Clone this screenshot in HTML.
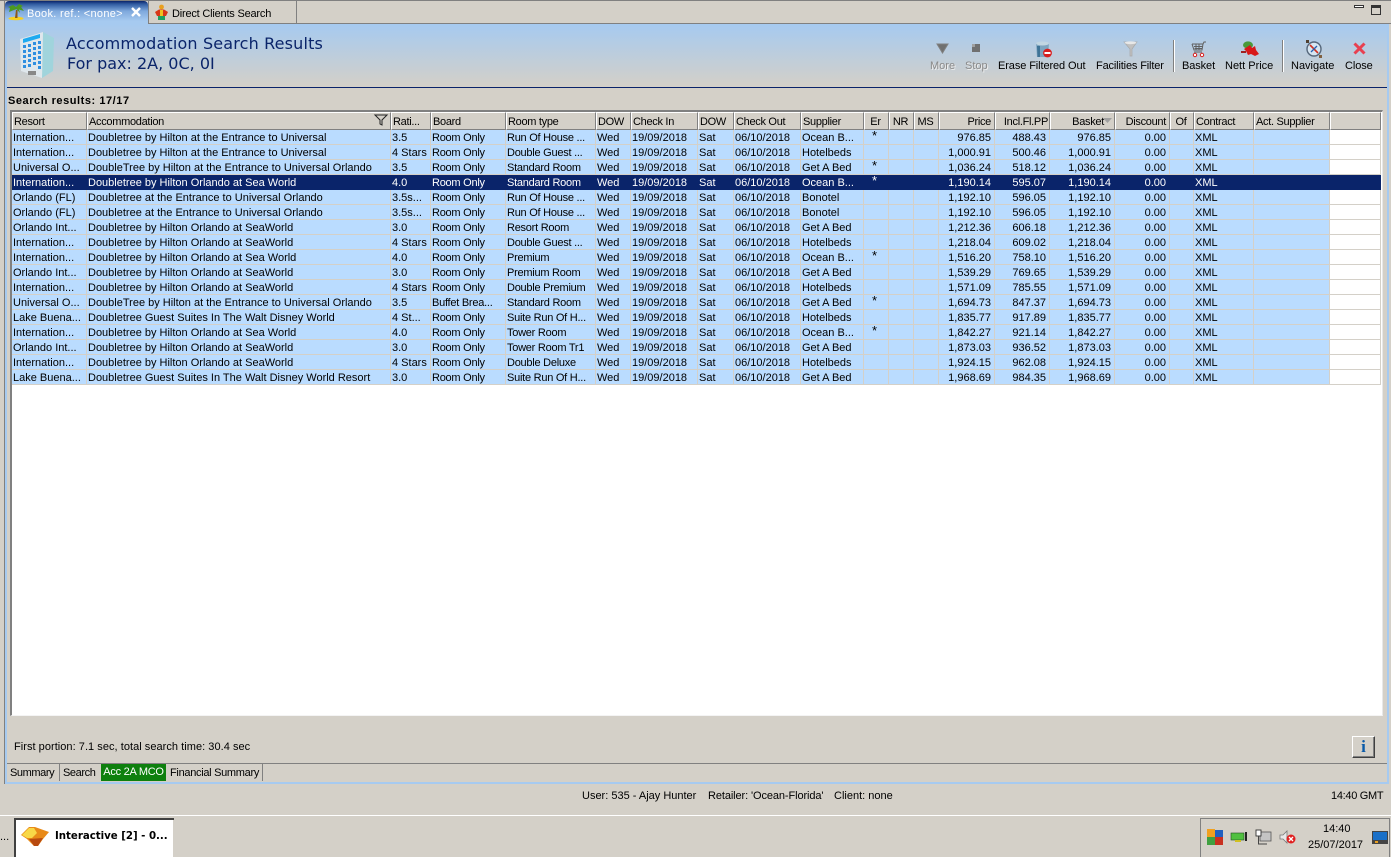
<!DOCTYPE html>
<html><head><meta charset="utf-8"><style>
html,body{margin:0;padding:0}
body{width:1391px;height:857px;position:relative;overflow:hidden;background:#d4d0c8;font:11px "Liberation Sans",sans-serif;color:#000}
.a{position:absolute;white-space:nowrap}
svg{position:absolute;overflow:visible}
#t{position:absolute;left:12px;top:112px;border-collapse:separate;border-spacing:0;table-layout:fixed;width:1369px}
#t th{height:14px;line-height:14px;padding:2px 0 0 1px;background:#d4d0c8;font-weight:normal;text-align:left;letter-spacing:-.3px;border-top:1px solid #fff;border-left:1px solid #fff;border-right:1px solid #808080;border-bottom:1px solid #808080;overflow:hidden;white-space:nowrap;box-sizing:content-box}
#t th.m{text-align:center;padding-right:3px}
#t td{height:12px;padding:2px 0 0 1px;background:#badcff;border-right:1px solid #d4d0c8;border-bottom:1px solid #d4d0c8;overflow:hidden;white-space:nowrap;line-height:12px}
#t td:nth-child(4),#t td:nth-child(5){letter-spacing:-.25px}
#t td:last-child{background:#fff}
#t th:last-child{background:#d4d0c8}
#t tr.s td{background:#0a246a;color:#fff;border-color:#0a246a}
#t td.r,#t th.r{text-align:right;padding-right:3px}
#t td.c{text-align:center;padding:0 3px 2px 0;height:12px;font-size:13px;line-height:12px}
</style></head><body>

<!-- outer frame -->
<div class="a" style="left:0;top:0;width:1391px;height:1px;background:#808080"></div>
<div class="a" style="left:4px;top:1px;width:1px;height:783px;background:#808080"></div>
<div class="a" style="left:297px;top:23px;width:1094px;height:1px;background:#808080"></div>
<!-- main blue frame -->
<div class="a" style="left:5px;top:24px;width:2px;height:760px;background:#a6caf0"></div>
<div class="a" style="left:1387px;top:24px;width:2px;height:760px;background:#a6caf0"></div>
<div class="a" style="left:5px;top:782px;width:1384px;height:2px;background:#a6caf0"></div>

<!-- tabs -->
<div class="a" style="left:5px;top:1px;width:143px;height:23px;background:linear-gradient(#0a246a 0,#2f5aa0 3px,#7ea8dc 10px,#a6caf0 20px);border-radius:4px 4px 0 0"></div>
<div class="a" style="left:148px;top:1px;width:1px;height:23px;background:#808080"></div>
<div class="a" style="left:27px;top:7px;color:#fff;font-size:11px;line-height:14px;letter-spacing:.3px">Book. ref.: &lt;none&gt;</div>
<svg style="left:8px;top:4px" width="16" height="16" viewBox="0 0 16 16"><ellipse cx="8" cy="14.5" rx="7.5" ry="1.8" fill="#f5d020"/><path d="M7 14 L8 6 L9.5 6 L9.5 14Z" fill="#8a5a18"/><path d="M8.5 5 L1 8 L2 4 L0 3 L5 1 L8 3 L11 0 L15 2 L13 3 L16 7 L11 5.5 L12 9Z" fill="#4b9a20"/></svg>
<svg style="left:131px;top:7px" width="10" height="10" viewBox="0 0 10 10"><path d="M1 1 L9 9 M9 1 L1 9" stroke="#fff" stroke-width="2.4"/></svg>
<div class="a" style="left:149px;top:1px;width:148px;height:22px;background:#d4d0c8;border-right:1px solid #808080;box-sizing:border-box"></div>
<div class="a" style="left:149px;top:23px;width:148px;height:1px;background:#808080"></div>
<div class="a" style="left:172px;top:7px;line-height:14px;letter-spacing:-.2px">Direct Clients Search</div>
<svg style="left:154px;top:4px" width="15" height="17" viewBox="0 0 15 17"><circle cx="7.5" cy="3" r="2.4" fill="#e8a020"/><path d="M1 8 L5 5.5 L10 5.5 L14 8 L12 12 L3 12Z" fill="#d83818"/><path d="M6 6 L9 6 L9 12 L6 12Z" fill="#f0c020"/><rect x="4" y="12" width="7" height="4" fill="#20a060"/></svg>
<!-- window buttons -->
<div class="a" style="left:1354px;top:5px;width:8px;height:1px;border:1px solid #333;background:#fff"></div>
<div class="a" style="left:1371px;top:5px;width:8px;height:6px;border:1px solid #333;border-top-width:3px"></div>

<!-- banner -->
<div class="a" style="left:7px;top:24px;width:1380px;height:63px;background:linear-gradient(#a6caf0,#d4d0c8)"></div>
<div class="a" style="left:7px;top:87px;width:1380px;height:1px;background:#0a246a"></div>
<svg style="left:20px;top:32px" width="34" height="47" viewBox="0 0 34 47"><path d="M23 0 L34 6 L33 39 L22 46Z" fill="#a0d4dc"/><path d="M0 7 L23 0 L22 46 L1 39Z" fill="#dfe7ec"/><path d="M3 7 L20 2 L20 6 L3 11Z" fill="#1eaaf0"/><g fill="#2f8fe0"><rect x="3" y="13" width="3" height="3"/><rect x="8" y="12" width="3" height="3"/><rect x="13" y="10" width="3" height="3"/><rect x="18" y="9" width="3" height="3"/><rect x="3" y="18" width="3" height="3"/><rect x="8" y="17" width="3" height="3"/><rect x="13" y="15" width="3" height="3"/><rect x="18" y="14" width="3" height="3"/><rect x="3" y="23" width="3" height="3"/><rect x="8" y="22" width="3" height="3"/><rect x="13" y="20" width="3" height="3"/><rect x="18" y="19" width="3" height="3"/><rect x="3" y="28" width="3" height="3"/><rect x="8" y="27" width="3" height="3"/><rect x="13" y="25" width="3" height="3"/><rect x="18" y="24" width="3" height="3"/><rect x="3" y="33" width="3" height="3"/><rect x="8" y="32" width="3" height="3"/><rect x="13" y="30" width="3" height="3"/><rect x="18" y="29" width="3" height="3"/><rect x="18" y="34" width="3" height="3"/></g><rect x="8" y="39" width="8" height="4" fill="#888"/></svg>
<div class="a" style="left:66px;top:34px;font:16px/20px 'DejaVu Sans',sans-serif;color:#0a246a;letter-spacing:.01em">Accommodation Search Results</div>
<div class="a" style="left:67px;top:54px;font:16px/20px 'DejaVu Sans',sans-serif;color:#0a246a">For pax: 2A, 0C, 0I</div>

<!-- toolbar -->
<div class="a" style="left:930px;top:59px;color:#8a8a8a;text-shadow:1px 1px 0 #eee;line-height:14px">More</div>
<div class="a" style="left:965px;top:59px;color:#8a8a8a;text-shadow:1px 1px 0 #eee;line-height:14px">Stop</div>
<div class="a" style="left:998px;top:59px;line-height:14px;letter-spacing:-.1px">Erase Filtered Out</div>
<div class="a" style="left:1096px;top:59px;line-height:14px;letter-spacing:-.15px">Facilities Filter</div>
<div class="a" style="left:1182px;top:59px;line-height:14px;letter-spacing:-.1px">Basket</div>
<div class="a" style="left:1225px;top:59px;line-height:14px">Nett Price</div>
<div class="a" style="left:1291px;top:59px;line-height:14px">Navigate</div>
<div class="a" style="left:1345px;top:59px;line-height:14px;letter-spacing:-.1px">Close</div>
<div class="a" style="left:1173px;top:40px;width:2px;height:32px;background:linear-gradient(90deg,#808080 50%,#fff 50%)"></div>
<div class="a" style="left:1282px;top:40px;width:2px;height:32px;background:linear-gradient(90deg,#808080 50%,#fff 50%)"></div>
<svg style="left:936px;top:43px" width="13" height="11" viewBox="0 0 13 11"><path d="M1 1 H12 L6.5 10Z" fill="#707070" stroke="#808080"/></svg>
<svg style="left:972px;top:44px" width="9" height="9" viewBox="0 0 9 9"><rect width="8" height="8" fill="#707070"/><rect width="3" height="3" fill="#a0a0a0"/></svg>
<svg style="left:1036px;top:41px" width="16" height="17" viewBox="0 0 16 17"><path d="M0 2 H13 L12 16 H1Z" fill="#7ea4bf"/><ellipse cx="6.5" cy="2.5" rx="6.5" ry="2" fill="#c2d6e2"/><path d="M1 5 H4 V16 H1.5Z" fill="#3f7396"/><circle cx="11.5" cy="12" r="4.4" fill="#d81e1e"/><rect x="8.5" y="11" width="6" height="2" fill="#fff"/></svg>
<svg style="left:1124px;top:41px" width="14" height="16" viewBox="0 0 14 16"><path d="M0 1 H13 L8 8 V15 H6 V8Z" fill="#c0c0c0" stroke="#a8a8a8" stroke-width=".7"/><ellipse cx="6.5" cy="1.8" rx="6" ry="1.4" fill="#e8e8e8"/></svg>
<svg style="left:1191px;top:41px" width="16" height="17" viewBox="0 0 16 17"><path d="M1 3 H12 L11 9 H3 L1 3 M3 5.5H12 M3.5 7.5H11 M5 3V9 M8 3V9 M12 3 L13 1 H15 M3 11H11" fill="none" stroke="#606060"/><circle cx="4" cy="14" r="1.7" fill="#fff" stroke="#d81e1e"/><circle cx="11" cy="14" r="1.7" fill="#fff" stroke="#d81e1e"/></svg>
<svg style="left:1241px;top:41px" width="18" height="16" viewBox="0 0 18 16"><ellipse cx="7" cy="4" rx="5" ry="3.6" fill="#4a9a3a"/><path d="M3 8 L9 4 L11 7 L14 5 L15 9 L18 13 L14 15 L10 13 L7 14 L5 10Z" fill="#d81818"/><rect x="0" y="10" width="5" height="2" fill="#a02020"/></svg>
<svg style="left:1305px;top:40px" width="18" height="18" viewBox="0 0 18 18"><circle cx="9" cy="9" r="7" fill="#d6e6f2" stroke="#55667a" stroke-width="1.4"/><path d="M5 5 L13 13" stroke="#d03020" stroke-width="1.6"/><path d="M12 6 L6 12" stroke="#2a60b0" stroke-width="1.3"/><rect x="1" y="0" width="3" height="3" fill="#504030"/><rect x="14" y="15" width="3" height="3" fill="#806040"/></svg>
<svg style="left:1353px;top:42px" width="13" height="13" viewBox="0 0 13 13"><path d="M1.5 1.5 L11.5 11.5 M11.5 1.5 L1.5 11.5" stroke="#e84050" stroke-width="3"/></svg>

<!-- search label -->
<div class="a" style="left:8px;top:94px;font-weight:bold;line-height:14px;font-size:11px;letter-spacing:.55px">Search results: 17/17</div>

<!-- table panel -->
<div class="a" style="left:10px;top:110px;width:1373px;height:606px;background:#fff;box-sizing:border-box;border-top:2px solid #808080;border-left:2px solid #808080;border-right:1px solid #e8e8e8;border-bottom:1px solid #f4f4f4"></div>

<table id="t"><colgroup>
<col style="width:75px"><col style="width:304px"><col style="width:40px"><col style="width:75px"><col style="width:90px"><col style="width:35px"><col style="width:67px"><col style="width:36px"><col style="width:67px"><col style="width:63px"><col style="width:25px"><col style="width:25px"><col style="width:25px"><col style="width:56px"><col style="width:55px"><col style="width:65px"><col style="width:55px"><col style="width:24px"><col style="width:60px"><col style="width:76px"><col>
</colgroup>
<tr><th>Resort</th><th>Accommodation</th><th>Rati...</th><th>Board</th><th>Room type</th><th>DOW</th><th>Check In</th><th>DOW</th><th>Check Out</th><th>Supplier</th><th class="m">Er</th><th class="m">NR</th><th class="m">MS</th><th class="r">Price</th><th class="r" style="padding-right:1px">Incl.Fl.PP</th><th class="r" style="padding-right:10px">Basket</th><th class="r">Discount</th><th class="m">Of</th><th>Contract</th><th>Act. Supplier</th><th></th></tr>
<tr><td>Internation...</td><td>Doubletree by Hilton at the Entrance to Universal</td><td>3.5</td><td>Room Only</td><td>Run Of House ...</td><td>Wed</td><td>19/09/2018</td><td>Sat</td><td>06/10/2018</td><td>Ocean B...</td><td class="c">*</td><td></td><td></td><td class="r">976.85</td><td class="r">488.43</td><td class="r">976.85</td><td class="r">0.00</td><td></td><td>XML</td><td></td><td></td></tr>
<tr><td>Internation...</td><td>Doubletree by Hilton at the Entrance to Universal</td><td>4 Stars</td><td>Room Only</td><td>Double Guest ...</td><td>Wed</td><td>19/09/2018</td><td>Sat</td><td>06/10/2018</td><td>Hotelbeds</td><td></td><td></td><td></td><td class="r">1,000.91</td><td class="r">500.46</td><td class="r">1,000.91</td><td class="r">0.00</td><td></td><td>XML</td><td></td><td></td></tr>
<tr><td>Universal O...</td><td>DoubleTree by Hilton at the Entrance to Universal Orlando</td><td>3.5</td><td>Room Only</td><td>Standard Room</td><td>Wed</td><td>19/09/2018</td><td>Sat</td><td>06/10/2018</td><td>Get A Bed</td><td class="c">*</td><td></td><td></td><td class="r">1,036.24</td><td class="r">518.12</td><td class="r">1,036.24</td><td class="r">0.00</td><td></td><td>XML</td><td></td><td></td></tr>
<tr class="s"><td>Internation...</td><td>Doubletree by Hilton Orlando at Sea World</td><td>4.0</td><td>Room Only</td><td>Standard Room</td><td>Wed</td><td>19/09/2018</td><td>Sat</td><td>06/10/2018</td><td>Ocean B...</td><td class="c">*</td><td></td><td></td><td class="r">1,190.14</td><td class="r">595.07</td><td class="r">1,190.14</td><td class="r">0.00</td><td></td><td>XML</td><td></td><td></td></tr>
<tr><td>Orlando (FL)</td><td>Doubletree at the Entrance to Universal Orlando</td><td>3.5s...</td><td>Room Only</td><td>Run Of House ...</td><td>Wed</td><td>19/09/2018</td><td>Sat</td><td>06/10/2018</td><td>Bonotel</td><td></td><td></td><td></td><td class="r">1,192.10</td><td class="r">596.05</td><td class="r">1,192.10</td><td class="r">0.00</td><td></td><td>XML</td><td></td><td></td></tr>
<tr><td>Orlando (FL)</td><td>Doubletree at the Entrance to Universal Orlando</td><td>3.5s...</td><td>Room Only</td><td>Run Of House ...</td><td>Wed</td><td>19/09/2018</td><td>Sat</td><td>06/10/2018</td><td>Bonotel</td><td></td><td></td><td></td><td class="r">1,192.10</td><td class="r">596.05</td><td class="r">1,192.10</td><td class="r">0.00</td><td></td><td>XML</td><td></td><td></td></tr>
<tr><td>Orlando Int...</td><td>Doubletree by Hilton Orlando at SeaWorld</td><td>3.0</td><td>Room Only</td><td>Resort Room</td><td>Wed</td><td>19/09/2018</td><td>Sat</td><td>06/10/2018</td><td>Get A Bed</td><td></td><td></td><td></td><td class="r">1,212.36</td><td class="r">606.18</td><td class="r">1,212.36</td><td class="r">0.00</td><td></td><td>XML</td><td></td><td></td></tr>
<tr><td>Internation...</td><td>Doubletree by Hilton Orlando at SeaWorld</td><td>4 Stars</td><td>Room Only</td><td>Double Guest ...</td><td>Wed</td><td>19/09/2018</td><td>Sat</td><td>06/10/2018</td><td>Hotelbeds</td><td></td><td></td><td></td><td class="r">1,218.04</td><td class="r">609.02</td><td class="r">1,218.04</td><td class="r">0.00</td><td></td><td>XML</td><td></td><td></td></tr>
<tr><td>Internation...</td><td>Doubletree by Hilton Orlando at Sea World</td><td>4.0</td><td>Room Only</td><td>Premium</td><td>Wed</td><td>19/09/2018</td><td>Sat</td><td>06/10/2018</td><td>Ocean B...</td><td class="c">*</td><td></td><td></td><td class="r">1,516.20</td><td class="r">758.10</td><td class="r">1,516.20</td><td class="r">0.00</td><td></td><td>XML</td><td></td><td></td></tr>
<tr><td>Orlando Int...</td><td>Doubletree by Hilton Orlando at SeaWorld</td><td>3.0</td><td>Room Only</td><td>Premium Room</td><td>Wed</td><td>19/09/2018</td><td>Sat</td><td>06/10/2018</td><td>Get A Bed</td><td></td><td></td><td></td><td class="r">1,539.29</td><td class="r">769.65</td><td class="r">1,539.29</td><td class="r">0.00</td><td></td><td>XML</td><td></td><td></td></tr>
<tr><td>Internation...</td><td>Doubletree by Hilton Orlando at SeaWorld</td><td>4 Stars</td><td>Room Only</td><td>Double Premium</td><td>Wed</td><td>19/09/2018</td><td>Sat</td><td>06/10/2018</td><td>Hotelbeds</td><td></td><td></td><td></td><td class="r">1,571.09</td><td class="r">785.55</td><td class="r">1,571.09</td><td class="r">0.00</td><td></td><td>XML</td><td></td><td></td></tr>
<tr><td>Universal O...</td><td>DoubleTree by Hilton at the Entrance to Universal Orlando</td><td>3.5</td><td>Buffet Brea...</td><td>Standard Room</td><td>Wed</td><td>19/09/2018</td><td>Sat</td><td>06/10/2018</td><td>Get A Bed</td><td class="c">*</td><td></td><td></td><td class="r">1,694.73</td><td class="r">847.37</td><td class="r">1,694.73</td><td class="r">0.00</td><td></td><td>XML</td><td></td><td></td></tr>
<tr><td>Lake Buena...</td><td>Doubletree Guest Suites In The Walt Disney World</td><td>4 St...</td><td>Room Only</td><td>Suite Run Of H...</td><td>Wed</td><td>19/09/2018</td><td>Sat</td><td>06/10/2018</td><td>Hotelbeds</td><td></td><td></td><td></td><td class="r">1,835.77</td><td class="r">917.89</td><td class="r">1,835.77</td><td class="r">0.00</td><td></td><td>XML</td><td></td><td></td></tr>
<tr><td>Internation...</td><td>Doubletree by Hilton Orlando at Sea World</td><td>4.0</td><td>Room Only</td><td>Tower Room</td><td>Wed</td><td>19/09/2018</td><td>Sat</td><td>06/10/2018</td><td>Ocean B...</td><td class="c">*</td><td></td><td></td><td class="r">1,842.27</td><td class="r">921.14</td><td class="r">1,842.27</td><td class="r">0.00</td><td></td><td>XML</td><td></td><td></td></tr>
<tr><td>Orlando Int...</td><td>Doubletree by Hilton Orlando at SeaWorld</td><td>3.0</td><td>Room Only</td><td>Tower Room Tr1</td><td>Wed</td><td>19/09/2018</td><td>Sat</td><td>06/10/2018</td><td>Get A Bed</td><td></td><td></td><td></td><td class="r">1,873.03</td><td class="r">936.52</td><td class="r">1,873.03</td><td class="r">0.00</td><td></td><td>XML</td><td></td><td></td></tr>
<tr><td>Internation...</td><td>Doubletree by Hilton Orlando at SeaWorld</td><td>4 Stars</td><td>Room Only</td><td>Double Deluxe</td><td>Wed</td><td>19/09/2018</td><td>Sat</td><td>06/10/2018</td><td>Hotelbeds</td><td></td><td></td><td></td><td class="r">1,924.15</td><td class="r">962.08</td><td class="r">1,924.15</td><td class="r">0.00</td><td></td><td>XML</td><td></td><td></td></tr>
<tr><td>Lake Buena...</td><td>Doubletree Guest Suites In The Walt Disney World Resort</td><td>3.0</td><td>Room Only</td><td>Suite Run Of H...</td><td>Wed</td><td>19/09/2018</td><td>Sat</td><td>06/10/2018</td><td>Get A Bed</td><td></td><td></td><td></td><td class="r">1,968.69</td><td class="r">984.35</td><td class="r">1,968.69</td><td class="r">0.00</td><td></td><td>XML</td><td></td><td></td></tr>
</table>
<!-- header icons -->
<svg style="left:374px;top:114px" width="14" height="12" viewBox="0 0 14 12"><path d="M1 1 H13 L8 6 V11 L6 10 V6Z" fill="none" stroke="#222"/></svg>
<svg style="left:1103px;top:118px" width="9" height="5" viewBox="0 0 9 5"><path d="M0 0 H9 L4.5 5Z" fill="#a0a0a0"/></svg>

<!-- bottom of panel -->
<div class="a" style="left:14px;top:740px;line-height:14px;letter-spacing:.04px">First portion: 7.1 sec, total search time: 30.4 sec</div>
<div class="a" style="left:1352px;top:736px;width:23px;height:22px;box-sizing:border-box;background:#d4d0c8;border:1px solid;border-color:#fff #404040 #404040 #fff;box-shadow:inset -1px -1px 0 #808080;text-align:center;font:bold 17px/20px 'Liberation Serif',serif;color:#0a5aa8">i</div>
<div class="a" style="left:7px;top:763px;width:1380px;height:1px;background:#808080"></div>
<div class="a" style="left:10px;top:766px;line-height:14px;letter-spacing:-.4px">Summary</div>
<div class="a" style="left:59px;top:764px;width:1px;height:17px;background:#808080"></div>
<div class="a" style="left:63px;top:766px;line-height:14px;letter-spacing:-.4px">Search</div>
<div class="a" style="left:101px;top:764px;width:65px;height:17px;background:#0e800e;color:#fff;text-align:center;line-height:17px;letter-spacing:-.25px">Acc 2A MCO</div>
<div class="a" style="left:170px;top:766px;line-height:14px;letter-spacing:-.3px">Financial Summary</div>
<div class="a" style="left:262px;top:764px;width:1px;height:17px;background:#808080"></div>

<!-- status -->
<div class="a" style="left:582px;top:789px;line-height:14px">User: 535 - Ajay Hunter</div>
<div class="a" style="left:708px;top:789px;line-height:14px;letter-spacing:-.1px">Retailer: 'Ocean-Florida'</div>
<div class="a" style="left:834px;top:789px;line-height:14px">Client: none</div>
<div class="a" style="left:1331px;top:789px;line-height:14px;letter-spacing:-.3px">14:40 GMT</div>

<!-- taskbar -->
<div class="a" style="left:0;top:815px;width:1391px;height:1px;background:#fff"></div>
<div class="a" style="left:0;top:830px;line-height:14px">...</div>
<div class="a" style="left:14px;top:818px;width:2px;height:39px;background:#404040"></div>
<div class="a" style="left:14px;top:818px;width:160px;height:2px;background:#404040"></div>
<div class="a" style="left:16px;top:820px;width:158px;height:37px;background:#fff;box-sizing:border-box;border-right:1px solid #d4d0c8"></div>
<svg style="left:21px;top:826px" width="29" height="22" viewBox="0 0 29 22"><path d="M0 9 L8 1 L14 1 L28 6 L22 13 L17 20 L13 20 L6 13Z" fill="#e88a18"/><path d="M1 9 L8 2 L13 2 L16 7 L11 12 L6 12Z" fill="#f8d848"/><path d="M8 13 L22 12 L17 20 L13 20Z" fill="#b84a10"/></svg>
<div class="a" style="left:55px;top:830px;font-weight:bold;font-family:'DejaVu Sans',sans-serif;font-size:10.2px;line-height:14px">Interactive [2] - 0...</div>

<!-- tray -->
<div class="a" style="left:1200px;top:818px;width:190px;height:39px;box-sizing:border-box;border:1px solid #808080;border-bottom:0"></div>
<svg style="left:1207px;top:829px" width="16" height="16" viewBox="0 0 16 16"><rect width="8" height="8" fill="#f0a020"/><rect x="8" y="1" width="8" height="7" fill="#2060c0"/><rect y="8" width="8" height="8" fill="#40a040"/><rect x="8" y="8" width="8" height="8" fill="#c83020"/></svg>
<svg style="left:1231px;top:832px" width="16" height="10" viewBox="0 0 16 10"><rect width="13" height="7" y="1" fill="#50c040" stroke="#205020" stroke-width=".6"/><rect x="14" y="0" width="2" height="9" fill="#222"/><rect x="4" y="8" width="6" height="2" fill="#d0c020"/></svg>
<svg style="left:1255px;top:829px" width="17" height="16" viewBox="0 0 17 16"><rect x="5" y="3" width="11" height="9" fill="#c4c4c4" stroke="#555" stroke-width=".8"/><rect x="1" y="1" width="5" height="6" fill="#fff" stroke="#333" stroke-width=".9"/><path d="M3.5 7 V15 H12" fill="none" stroke="#444"/></svg>
<svg style="left:1279px;top:830px" width="17" height="15" viewBox="0 0 17 15"><path d="M1 5 H4 L8 1 V13 L4 9 H1Z" fill="#e8e8e8" stroke="#777" stroke-width=".8"/><circle cx="12" cy="9" r="4.5" fill="#e02020"/><path d="M10 7 L14 11 M14 7 L10 11" stroke="#fff" stroke-width="1.3"/></svg>
<div class="a" style="left:1323px;top:822px;line-height:14px">14:40</div>
<div class="a" style="left:1308px;top:838px;line-height:14px">25/07/2017</div>
<svg style="left:1372px;top:831px" width="16" height="13" viewBox="0 0 16 13"><rect width="16" height="13" fill="#444"/><rect x="1" y="1" width="14" height="8" fill="#1a70c8"/><rect x="3" y="10" width="3" height="2" fill="#e8a020"/></svg>
</body></html>
